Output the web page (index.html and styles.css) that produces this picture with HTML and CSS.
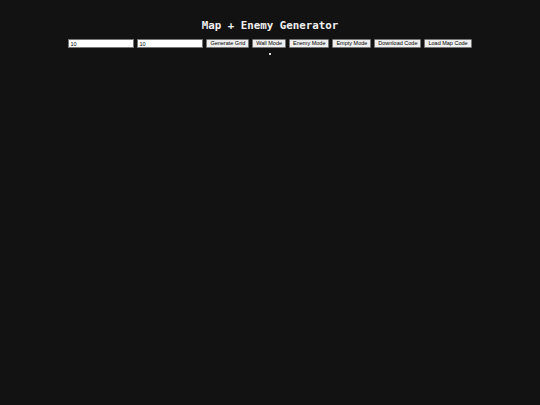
FILE: index.html
```
<!DOCTYPE html>
<html>
<head>
<meta charset="utf-8">
<link rel="stylesheet" href="styles.css">
</head>
<body>
<h1 class="title">Map + Enemy Generator</h1>
<div class="controls">
  <input class="num" type="text" value="10">
  <input class="num" type="text" value="10">
  <button class="btn">Generate Grid</button>
  <button class="btn">Wall Mode</button>
  <button class="btn">Enemy Mode</button>
  <button class="btn">Empty Mode</button>
  <button class="btn">Download Code</button>
  <button class="btn">Load Map Code</button>
</div>
<div class="grid-wrap"><div class="grid"></div></div>
</body>
</html>
```
FILE: styles.css
```
html, body {
  margin: 0;
  padding: 0;
  background: #121212;
  width: 540px;
  height: 405px;
  overflow: hidden;
}
body {
  font-family: "Liberation Sans", Arial, sans-serif;
  color: #eee;
}
.title {
  margin: 0;
  padding-top: 18px;
  height: 16px;
  line-height: 16px;
  text-align: center;
  font-family: "DejaVu Sans Mono", monospace;
  font-weight: bold;
  font-size: 10.8px;
  color: #f0f0f0;
}
.controls {
  margin-top: 5px;
  display: flex;
  justify-content: center;
  align-items: center;
  gap: 3px;
}
.num {
  box-sizing: border-box;
  width: 66px;
  height: 9px;
  padding: 0 1px;
  margin: 0;
  border: 1px solid #767676;
  background: #fff;
  color: #000;
  font-family: "Liberation Sans", Arial, sans-serif;
  font-size: 5.5px;
  line-height: 7px;
}
.btn {
  box-sizing: border-box;
  height: 9px;
  padding: 0 3px;
  margin: 0;
  border: 1px solid #767676;
  border-radius: 1px;
  background: #efefef;
  color: #000;
  font-family: "Liberation Sans", Arial, sans-serif;
  font-size: 5.5px;
  line-height: 7px;
}
.grid-wrap {
  display: flex;
  justify-content: center;
  margin-top: 5px;
}
.grid {
  width: 2px;
  height: 2px;
  background: #ddd;
}
```
